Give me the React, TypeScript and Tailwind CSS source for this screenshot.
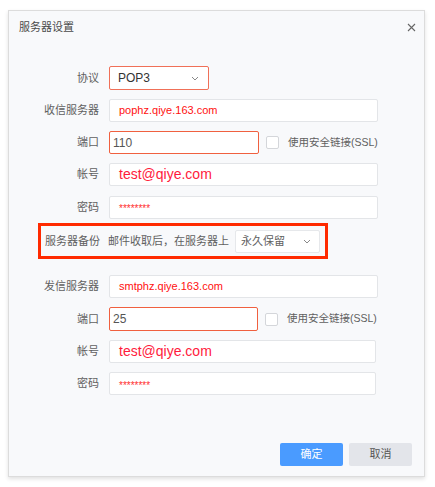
import type { ReactNode } from "react";

const font = {
  fontFamily: '"Liberation Sans", "Noto Sans CJK SC", sans-serif',
};

function Chevron() {
  return (
    <svg width="8" height="5" viewBox="0 0 8 5" className="text-[#888]">
      <path d="M1 1l3 3 3-3" fill="none" stroke="currentColor" strokeWidth="1" />
    </svg>
  );
}

function Row({
  label,
  className,
  children,
}: {
  label: string;
  className?: string;
  children: ReactNode;
}) {
  return (
    <div className={`flex items-center h-[23px] ${className ?? ""}`}>
      <div className="w-[90px] text-right text-[11px] text-[#606060] mr-[10px]">
        {label}
      </div>
      {children}
    </div>
  );
}

function Field({
  width,
  children,
  red,
  textClass,
}: {
  width: string;
  children: ReactNode;
  red?: boolean;
  textClass: string;
}) {
  return (
    <div
      className={`h-[23px] ${width} bg-white flex items-center rounded-[2px] border ${
        red ? "border-[#f0603f]" : "border-[#e3e5e8]"
      } ${textClass}`}
    >
      {children}
    </div>
  );
}

function Ssl() {
  return (
    <div className="flex items-center ml-[7px]">
      <div className="w-[13px] h-[13px] bg-white border border-[#d4d6da] rounded-[2px]" />
      <span className="ml-[9px] text-[10.5px] text-[#606060]">使用安全链接(SSL)</span>
    </div>
  );
}

export default function App() {
  return (
    <div className="w-[435px] h-[487px] bg-white pt-[10px] pl-[8px]" style={font}>
      <div className="w-[417px] h-[467px] bg-[#f8f9fb] border border-[#dcdcdc] shadow-[0_2px_4px_rgba(0,0,0,0.12)] flex flex-col">
        <div className="flex items-center justify-between h-[32px] pl-[10px] pr-[8px]">
          <span className="text-[11px] text-[#4a4a4a]">服务器设置</span>
          <svg width="9" height="9" viewBox="0 0 9 9" className="text-[#666]">
            <path d="M1 1l7 7M8 1l-7 7" stroke="currentColor" strokeWidth="1.1" />
          </svg>
        </div>

        <Row label="协议" className="mt-[23px] h-[24px]">
          <div className="h-[24px] w-[100px] bg-white border border-[#f07058] rounded-[2px] flex items-center justify-between pl-[8px] pr-[9px] text-[12px] text-[#333]">
            <span>POP3</span>
            <Chevron />
          </div>
        </Row>

        <Row label="收信服务器" className="mt-[9px]">
          <Field width="w-[269px]" textClass="pl-[9px] text-[11px] text-[#ff1010]">
            pophz.qiye.163.com
          </Field>
        </Row>

        <Row label="端口" className="mt-[9px]">
          <Field width="w-[150px]" red textClass="pl-[3px] text-[12px] text-[#555]">
            110
          </Field>
          <Ssl />
        </Row>

        <Row label="帐号" className="mt-[9px]">
          <Field width="w-[269px]" textClass="pl-[9px] text-[14px] text-[#ff1a3c]">
            test@qiye.com
          </Field>
        </Row>

        <Row label="密码" className="mt-[10px] h-[22px]">
          <Field width="w-[269px] h-[22px]" textClass="pl-[9px] text-[10px] text-[#ff3030] pt-[2px]">
            ********
          </Field>
        </Row>

        <div className="mt-[4px] ml-[29px] w-[290px] h-[36px] border-[3px] border-[#ff2a00] flex items-center pl-[4px]">
          <span className="text-[11px] text-[#606060]">服务器备份</span>
          <span className="ml-[8px] text-[11px] text-[#606060]">邮件收取后，在服务器上</span>
          <div className="ml-[6px] h-[23px] w-[85px] bg-white border border-[#e6e8eb] rounded-[2px] flex items-center justify-between pl-[5px] pr-[8px] text-[11px] text-[#606060]">
            <span>永久保留</span>
            <Chevron />
          </div>
        </div>

        <Row label="发信服务器" className="mt-[16px]">
          <Field width="w-[269px]" textClass="pl-[9px] text-[11px] text-[#ff1010]">
            smtphz.qiye.163.com
          </Field>
        </Row>

        <Row label="端口" className="mt-[9px] h-[24px]">
          <Field width="w-[149px] h-[24px]" red textClass="pl-[3px] text-[12px] text-[#555]">
            25
          </Field>
          <Ssl />
        </Row>

        <Row label="帐号" className="mt-[9px]">
          <Field width="w-[267px]" textClass="pl-[9px] text-[14px] text-[#ff1a3c]">
            test@qiye.com
          </Field>
        </Row>

        <Row label="密码" className="mt-[9px]">
          <Field width="w-[267px]" textClass="pl-[9px] text-[10px] text-[#ff3030] pt-[4px]">
            ********
          </Field>
        </Row>

        <div className="mt-auto mb-[10px] flex justify-end gap-[6px] pr-[12px]">
          <button className="w-[63px] h-[23px] rounded-[2px] bg-[#4a9bff] text-white text-[11px]">
            确定
          </button>
          <button className="w-[63px] h-[23px] rounded-[2px] bg-[#e3e5ea] text-[#555] text-[11px]">
            取消
          </button>
        </div>
      </div>
    </div>
  );
}
